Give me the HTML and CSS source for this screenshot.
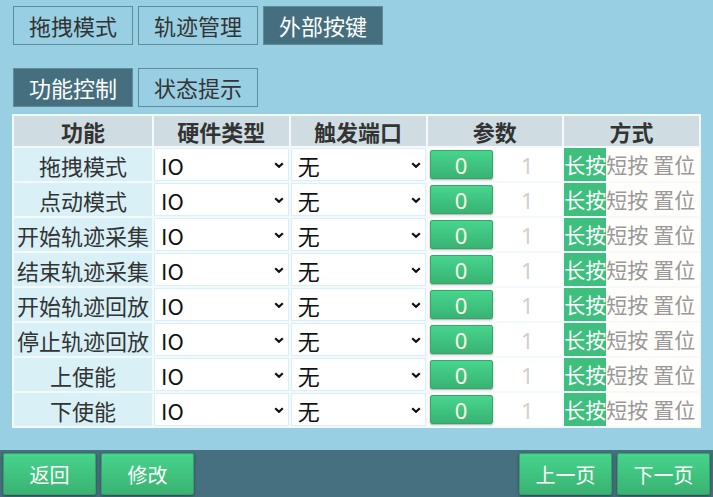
FILE: index.html
```html
<!DOCTYPE html>
<html lang="zh-CN">
<head>
    <meta charset="UTF-8">
    <meta name="viewport" content="width=device-width, initial-scale=1.0">
    <title>外部按键 - 功能控制</title>
    <link rel="stylesheet" href="styles.css">
</head>
<body>
    <div class="tabs main-tabs">
        <div class="tab">拖拽模式</div>
        <div class="tab">轨迹管理</div>
        <div class="tab active">外部按键</div>
    </div>

    <div class="tabs sub-tabs">
        <div class="tab active">功能控制</div>
        <div class="tab">状态提示</div>
    </div>

    <table class="keys">
        <thead>
            <tr>
                <th class="col-name">功能</th>
                <th>硬件类型</th>
                <th>触发端口</th>
                <th>参数</th>
                <th>方式</th>
            </tr>
        </thead>
        <tbody id="keyRows"></tbody>
    </table>

    <div class="footer">
        <button class="btn">返回</button>
        <button class="btn">修改</button>
        <div class="spacer"></div>
        <button class="btn">上一页</button>
        <button class="btn">下一页</button>
    </div>

    <script>
        const functions = ['拖拽模式', '点动模式', '开始轨迹采集', '结束轨迹采集',
                           '开始轨迹回放', '停止轨迹回放', '上使能', '下使能'];

        const chevron = '<svg class="chev" width="10" height="6" viewBox="0 0 10 6">' +
            '<path d="M1.2 1.2 L5 4.8 L8.8 1.2" fill="none" stroke="#111" stroke-width="2.2"/></svg>';

        document.getElementById('keyRows').innerHTML = functions.map(name => `
            <tr>
                <td class="name">${name}</td>
                <td class="pick-cell">
                    <div class="pick">
                        <select><option>IO</option></select>${chevron}
                    </div>
                </td>
                <td class="pick-cell">
                    <div class="pick">
                        <select><option>无</option></select>${chevron}
                    </div>
                </td>
                <td class="param">
                    <div class="param-wrap">
                        <button class="num">0</button>
                        <span class="off">1</span>
                    </div>
                </td>
                <td class="mode">
                    <span class="on">长按</span><span class="opt">短按</span><span class="opt gap">置位</span>
                </td>
            </tr>
        `).join('');
    </script>
</body>
</html>
```

FILE: styles.css
```css
body {
    margin: 0;
    height: 497px;
    display: flex;
    flex-direction: column;
    background: #99cfe2;
    font-family: "Noto Sans CJK SC", "Noto Sans", sans-serif;
    color: #333;
    overflow: hidden;
}
.tabs {
    display: flex;
    gap: 5px;
    margin-left: 13px;
}
.main-tabs {
    margin-top: 6px;
}
.sub-tabs {
    margin-top: 23px;
}
.tab {
    box-sizing: border-box;
    width: 120px;
    height: 39px;
    border: 1px solid #5f8c9b;
    font-size: 22px;
    line-height: 36px;
    text-align: center;
    color: #333;
}
.tab.active {
    background: #456f7f;
    color: white;
}
.keys {
    margin: 7px 0 0 12px;
    width: 689px;
    border-spacing: 2px;
    background: #f4fafc;
    table-layout: fixed;
    font-size: 22px;
}
.keys th {
    height: 30px;
    padding: 0;
    background: #cfdde2;
    font-weight: bold;
    color: #333;
    line-height: 30px;
}
.keys th.col-name {
    width: 138px;
}
.keys td {
    height: 33px;
    padding: 0;
}
.name {
    background: #d9f0f7;
    text-align: center;
    white-space: nowrap;
    color: #333;
}
.pick-cell {
    background: #d9f0f7;
}
.pick {
    position: relative;
    margin: 1px;
    height: 31px;
    background: white;
}
.pick select {
    appearance: none;
    -webkit-appearance: none;
    width: 100%;
    height: 31px;
    border: none;
    background: transparent;
    padding: 0 0 0 6px;
    font-family: inherit;
    font-size: 22px;
    color: #111;
    outline: none;
}
.chev {
    position: absolute;
    right: 4px;
    top: 13px;
    pointer-events: none;
}
.param {
    background: white;
}
.param-wrap {
    display: flex;
    align-items: center;
}
.num {
    box-sizing: border-box;
    width: 63px;
    height: 29px;
    margin-left: 2px;
    border: 1px solid #36a669;
    border-radius: 2px;
    background: linear-gradient(#47d58d, #38b374);
    box-shadow: 0 1px 2px rgba(0,0,0,0.35);
    color: #fffbe8;
    font-family: "Noto Sans", sans-serif;
    font-size: 22px;
    line-height: 26px;
    padding: 0;
}
.off {
    flex: 1;
    text-align: center;
    color: #cfcfcf;
    font-family: "Noto Sans", sans-serif;
    font-size: 22px;
}
.mode {
    background: #fffefb;
    white-space: nowrap;
    font-size: 21px;
}
.mode span {
    display: inline-block;
    width: 42px;
    height: 33px;
    line-height: 32px;
    text-align: center;
    vertical-align: top;
}
.on {
    background: #3ebf7e;
    color: white;
}
.opt {
    color: #999;
}
.opt.gap {
    margin-left: 5px;
}
.footer {
    margin-top: auto;
    height: 47px;
    box-sizing: border-box;
    padding: 3px 3px 0;
    display: flex;
    gap: 5px;
    background: #46707f;
}
.spacer {
    flex: 1;
}
.btn {
    width: 93px;
    height: 42px;
    border: 1px solid #35a266;
    border-radius: 2px;
    background: linear-gradient(#46d48c, #3ab272);
    box-shadow: 0 1px 3px rgba(0,0,0,0.4);
    color: white;
    font-family: "Noto Sans CJK SC", sans-serif;
    font-size: 20px;
    cursor: pointer;
}
```
